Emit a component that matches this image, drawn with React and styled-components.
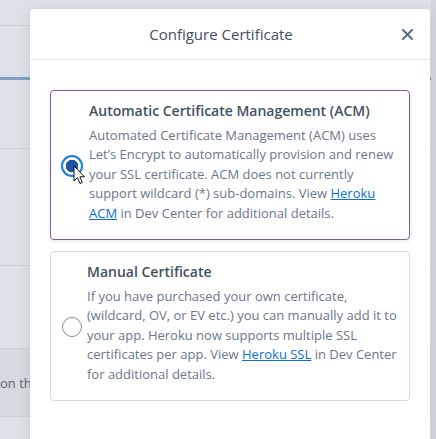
import React from 'react';
import styled, { createGlobalStyle } from 'styled-components';

const GlobalStyle = createGlobalStyle`
  html, body {
    margin: 0;
    padding: 0;
    width: 436px;
    height: 439px;
    overflow: hidden;
  }
  body {
    font-family: "Open Sans", "Noto Sans", sans-serif;
    -webkit-font-smoothing: antialiased;
  }
`;

const Screen = styled.div`
  position: relative;
  width: 436px;
  height: 439px;
  overflow: hidden;
  background: #dde0e6;
`;

/* faded app page behind the modal */
const Page = styled.div`
  display: flex;
  height: 100%;
`;

const PageMain = styled.div`
  flex: 1;
  display: flex;
  flex-direction: column;
`;

const Gutter = styled.div`
  width: 5px;
  background: #d2d6dd;
`;

const PageRow = styled.div`
  height: ${p => p.h}px;
  flex-shrink: 0;
  border-bottom: ${p => p.thick ? '3px solid #7f9ec8' : '1px solid #cbd0d8'};
  background: ${p => p.dark ? '#d6d9e0' : 'transparent'};
  display: flex;
  align-items: center;
  font-size: 13px;
  color: #5b6473;
  white-space: nowrap;
`;

const Overlay = styled.div`
  position: absolute;
  inset: 0;
  display: flex;
  justify-content: flex-start;
  padding: 9px 0 0 30px;
`;

const Modal = styled.div`
  width: 400px;
  height: 480px;
  background: #fff;
  border-radius: 4px;
  box-shadow: 0 2px 12px rgba(40, 50, 70, 0.12);
  display: flex;
  flex-direction: column;
`;

const Header = styled.div`
  height: 50px;
  flex-shrink: 0;
  display: flex;
  align-items: center;
  padding: 0 14px 0 20px;
  border-bottom: 1px solid #e6e9ee;
`;

const Title = styled.h2`
  flex: 1;
  margin: 0;
  text-align: center;
  font-size: 15px;
  font-weight: 400;
  color: #434f60;
`;

const CloseButton = styled.button`
  width: 18px;
  height: 18px;
  margin-left: 6px;
  padding: 0;
  border: 0;
  background: none;
  display: flex;
  align-items: center;
  justify-content: center;
  cursor: pointer;
`;

const Body = styled.div`
  padding: 30px 20px 0;
  display: flex;
  flex-direction: column;
  gap: 11px;
`;

const Option = styled.label`
  position: relative;
  display: flex;
  align-items: center;
  padding: 10px 9px 16px 10px;
  border: 1px solid ${p => p.selected ? '#7c5aa6' : '#d3d9e6'};
  border-radius: 4px;
  box-shadow: ${p => p.selected ? '0 1px 4px rgba(60, 40, 100, 0.12)' : 'none'};
`;

const Radio = styled.span`
  width: ${p => p.checked ? 22 : 20}px;
  height: ${p => p.checked ? 22 : 20}px;
  flex-shrink: 0;
  box-sizing: border-box;
  border-radius: 50%;
  border: ${p => p.checked ? '2px solid #1a7ee0' : '1px solid #8a8d93'};
  background: ${p => p.checked ? 'radial-gradient(circle, #1d56a5 0 6px, #fff 6.5px)' : '#fff'};
  margin: ${p => p.checked ? '8px 6px 0 0' : '8px 5px 0 1px'};
`;

const Text = styled.div`
  flex: 1;
  display: flex;
  flex-direction: column;
  gap: 6px;
`;

const OptionTitle = styled.div`
  font-size: 14px;
  font-weight: 600;
  line-height: 19px;
  color: #434f60;
`;

const Desc = styled.p`
  margin: 0;
  font-size: 13px;
  line-height: 19.4px;
  color: #6b7689;
`;

const Link = styled.a`
  color: #0b6fd6;
  text-decoration: underline;
`;

const Pointer = styled.svg`
  position: absolute;
  left: 22px;
  top: 74px;
`;

export default function App() {
  return (
    <>
      <GlobalStyle />
      <Screen>
        <Page>
          <PageMain>
            <PageRow h={25} />
            <PageRow h={51} thick />
            <PageRow h={68} />
            <PageRow h={116} />
            <PageRow h={82} />
            <PageRow h={67} dark>on this app</PageRow>
            <PageRow h={30} />
          </PageMain>
          <Gutter />
        </Page>
        <Overlay>
          <Modal>
            <Header>
              <Title>Configure Certificate</Title>
              <CloseButton aria-label="Close">
                <svg width="11" height="11" viewBox="0 0 11 11">
                  <path d="M1 1L10 10M10 1L1 10" stroke="#5d6b82" strokeWidth="2" strokeLinecap="round" />
                </svg>
              </CloseButton>
            </Header>
            <Body>
              <Option selected>
                <Radio checked />
                <Text>
                  <OptionTitle>Automatic Certificate Management (ACM)</OptionTitle>
                  <Desc>
                    Automated Certificate Management (ACM) uses Let’s Encrypt to automatically
                    provision and renew your SSL certificate. ACM does not currently support
                    wildcard (*) sub-domains. View <Link href="#">Heroku ACM</Link> in Dev Center
                    for additional details.
                  </Desc>
                </Text>
                <Pointer width="12" height="20" viewBox="0 0 12 20">
                  <path d="M1 1V16L4.5 12.6L7 18.5L9.3 17.5L6.9 11.8H11.5Z" fill="#fff" stroke="#111" strokeWidth="1" strokeLinejoin="round" />
                </Pointer>
              </Option>
              <Option>
                <Radio />
                <Text>
                  <OptionTitle>Manual Certificate</OptionTitle>
                  <Desc>
                    If you have purchased your own certificate, (wildcard, OV, or EV etc.) you can
                    manually add it to your app. Heroku now supports multiple SSL certificates per
                    app. View <Link href="#">Heroku SSL</Link> in Dev Center for additional details.
                  </Desc>
                </Text>
              </Option>
            </Body>
          </Modal>
        </Overlay>
      </Screen>
    </>
  );
}
